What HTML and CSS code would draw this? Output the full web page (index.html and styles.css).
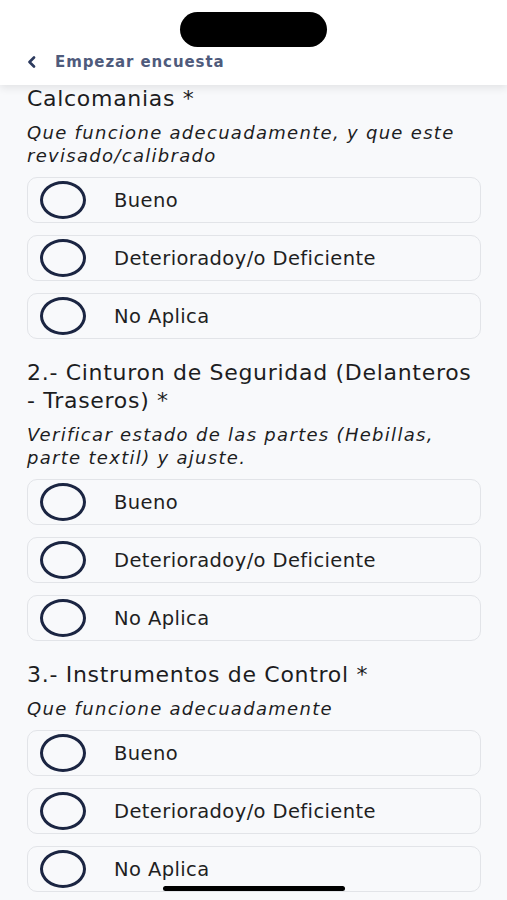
FILE: index.html
```html
<!DOCTYPE html>
<html>
	<head>
		<meta charset="utf-8" />
		<title>Empezar encuesta</title>
		<link rel="stylesheet" href="styles.css">
	</head>
	<body>
		<div class="header">
			<div class="notch"></div>
			<div class="back">
				<svg class="chev" width="10" height="12" viewBox="0 0 10 12"><path d="M7 1.5 L2.5 6 L7 10.5" fill="none" stroke="#2c3a5e" stroke-width="2.6" stroke-linecap="round" stroke-linejoin="round"/></svg>
				<span>Empezar encuesta</span>
			</div>
		</div>

		<div class="content">
			<div class="question">
				<div class="q-title">Calcomanias *</div>
				<div class="q-sub">Que funcione adecuadamente, y que este revisado/calibrado</div>
				<div class="options">
					<div class="option"><span class="radio"></span>Bueno</div>
					<div class="option"><span class="radio"></span>Deterioradoy/o Deficiente</div>
					<div class="option"><span class="radio"></span>No Aplica</div>
				</div>
			</div>

			<div class="question">
				<div class="q-title">2.- Cinturon de Seguridad (Delanteros - Traseros) *</div>
				<div class="q-sub">Verificar estado de las partes (Hebillas, parte textil) y ajuste.</div>
				<div class="options">
					<div class="option"><span class="radio"></span>Bueno</div>
					<div class="option"><span class="radio"></span>Deterioradoy/o Deficiente</div>
					<div class="option"><span class="radio"></span>No Aplica</div>
				</div>
			</div>

			<div class="question">
				<div class="q-title">3.- Instrumentos de Control *</div>
				<div class="q-sub">Que funcione adecuadamente</div>
				<div class="options">
					<div class="option"><span class="radio"></span>Bueno</div>
					<div class="option"><span class="radio"></span>Deterioradoy/o Deficiente</div>
					<div class="option"><span class="radio"></span>No Aplica</div>
				</div>
			</div>
		</div>

		<div class="home-bar"></div>
	</body>
</html>
```
FILE: styles.css
```css
* {
	padding: 0px;
	margin: 0px;
	box-sizing: border-box;
}

html, body {
	height: 900px;
	overflow: hidden;
}

body {
	background-color: #f8f9fb;
	font-family: "DejaVu Sans", "Liberation Sans", sans-serif;
	color: #1d1d1f;
	position: relative;
}

.header {
	height: 85px;
	background: #fff;
	display: flex;
	flex-direction: column;
	align-items: center;
	padding-top: 12px;
	box-shadow: 0 3px 8px rgba(0,0,0,.09);
	position: relative;
	z-index: 2;
}

.notch {
	width: 147px;
	height: 35px;
	border-radius: 18px;
	background: #000;
}

.back {
	align-self: stretch;
	display: flex;
	align-items: center;
	height: 20px;
	margin-top: 5px;
	padding-left: 27px;
	gap: 18px;
	color: #4f5b7c;
	font-weight: bold;
	font-size: 15px;
	letter-spacing: 0.9px;
}

.content {
	padding: 0 26px 0 27px;
	display: flex;
	flex-direction: column;
	gap: 20px;
}

.q-title {
	font-size: 22px;
	line-height: 28px;
	letter-spacing: 0.7px;
	padding-right: 8px;
}

.q-sub {
	margin-top: 8px;
	font-style: italic;
	font-size: 18px;
	line-height: 23px;
	letter-spacing: 1.3px;
}

.options {
	margin-top: 10px;
	display: flex;
	flex-direction: column;
	gap: 12px;
}

.option {
	height: 46px;
	border: 1.5px solid #e2e4e8;
	border-radius: 10px;
	display: flex;
	align-items: center;
	padding-left: 12px;
	font-size: 19.5px;
	letter-spacing: 0.4px;
	color: #1f1f1f;
}

.radio {
	width: 46px;
	height: 38px;
	border: 3px solid #1b2542;
	border-radius: 50%;
	margin-right: 28px;
}

.home-bar {
	position: absolute;
	left: 163px;
	bottom: 9px;
	width: 182px;
	height: 5px;
	border-radius: 3px;
	background: #000;
}
```
